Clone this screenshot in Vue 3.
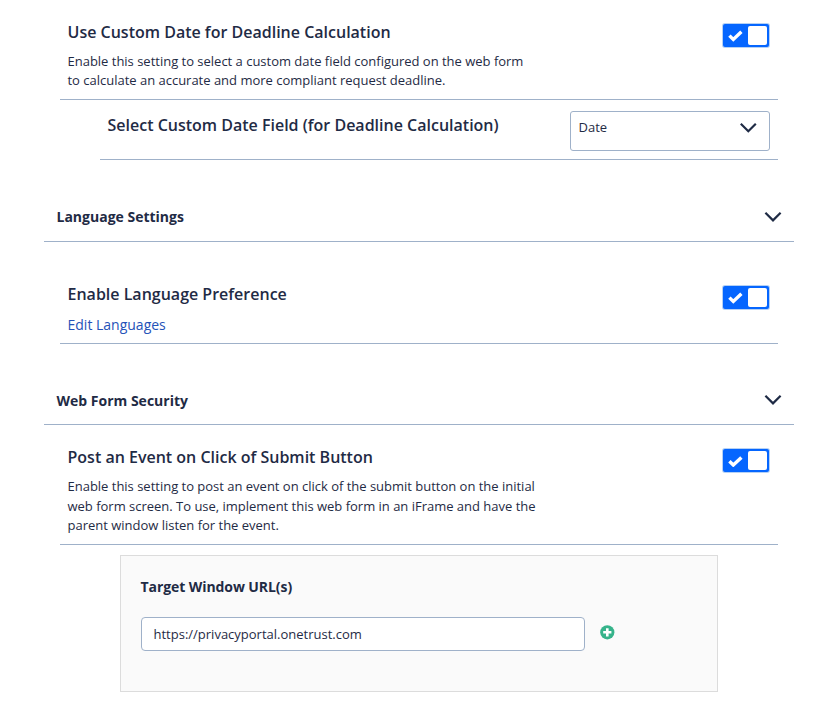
<template>
  <div class="page">
    <div class="row custom-date">
      <div class="text">
        <h3>Use Custom Date for Deadline Calculation</h3>
        <p>Enable this setting to select a custom date field configured on the web form<br />to calculate an accurate and more compliant request deadline.</p>
      </div>
      <button class="toggle" :class="{ off: !customDate }" @click="customDate = !customDate">
        <svg width="15" height="12" viewBox="0 0 15 12"><path d="M1.4 5.6 L5.3 9.4 L13.4 1.8" /></svg>
        <span class="knob"></span>
      </button>
    </div>

    <div class="row sub">
      <h3>Select Custom Date Field (for Deadline Calculation)</h3>
      <div class="select">
        <span>Date</span>
        <svg class="chevron" width="18" height="12" viewBox="0 0 18 12"><path d="M1.8 1.8 L9.3 9.2 L16.8 1.8" /></svg>
      </div>
    </div>

    <div class="head">
      <h2>Language Settings</h2>
      <svg class="chevron" width="18" height="12" viewBox="0 0 18 12"><path d="M1.4 1.8 L9 9.4 L16.6 1.8" /></svg>
    </div>

    <div class="row language">
      <div class="text">
        <h3>Enable Language Preference</h3>
        <a href="#" @click.prevent>Edit Languages</a>
      </div>
      <button class="toggle" :class="{ off: !language }" @click="language = !language">
        <svg width="15" height="12" viewBox="0 0 15 12"><path d="M1.4 5.6 L5.3 9.4 L13.4 1.8" /></svg>
        <span class="knob"></span>
      </button>
    </div>

    <div class="head security">
      <h2>Web Form Security</h2>
      <svg class="chevron" width="18" height="12" viewBox="0 0 18 12"><path d="M1.4 1.8 L9 9.4 L16.6 1.8" /></svg>
    </div>

    <div class="row">
      <div class="text">
        <h3>Post an Event on Click of Submit Button</h3>
        <p>Enable this setting to post an event on click of the submit button on the initial<br />web form screen. To use, implement this web form in an iFrame and have the<br />parent window listen for the event.</p>
      </div>
      <button class="toggle" :class="{ off: !postEvent }" @click="postEvent = !postEvent">
        <svg width="15" height="12" viewBox="0 0 15 12"><path d="M1.4 6.2 L5.3 10 L13.4 2.4" /></svg>
        <span class="knob"></span>
      </button>
    </div>

    <div class="panel">
      <h2>Target Window URL(s)</h2>
      <div v-for="(url, i) in urls" :key="i" class="url">
        <input v-model="urls[i]" type="text" />
        <button class="add" @click="urls.push('')">
          <svg width="15" height="15" viewBox="0 0 15 15">
            <circle cx="7.3" cy="7.3" r="7.1" fill="#36b38a" />
            <path d="M7.3 3.2 V11.4 M3.2 7.3 H11.4" stroke="#fff" stroke-width="2.6" />
          </svg>
        </button>
      </div>
    </div>
  </div>
</template>

<script setup>
import { ref } from 'vue'

const customDate = ref(true)
const language = ref(true)
const postEvent = ref(true)
const urls = ref(['https://privacyportal.onetrust.com'])
</script>

<style>
body { margin: 0; background: #fff; }
</style>

<style scoped>
.page {
  box-sizing: border-box; width: 838px; height: 710px; padding: 0 44px;
  font-family: "Open Sans", "Noto Sans", sans-serif; color: #1f2b45;
}
h2, h3, p { margin: 0; }
h2 { font-size: 14px; font-weight: 700; line-height: 20px; }
h3 { font-size: 16px; font-weight: 600; line-height: 24px; }
p { margin-top: 8px; font-size: 13px; line-height: 19.5px; letter-spacing: -0.01px; white-space: nowrap; }

.row {
  box-sizing: border-box; display: flex; justify-content: space-between; align-items: flex-start;
  margin: 0 16px; padding: 20px 9px 8px 7.5px; border-bottom: 1px solid #9fb1c9;
}
.row.custom-date { height: 100px; }
.custom-date p { line-height: 19px; }
.row.sub { height: 60px; margin-left: 56px; padding: 11px 8px 0 7.5px; }
.row.sub h3 { margin-top: 2px; }
.row.language { height: 102px; padding-top: 40px; }
.language a {
  display: block; margin-top: 9px; font-size: 14px; line-height: 20px;
  color: #2552b8; text-decoration: none;
}

.toggle {
  box-sizing: border-box; display: flex; align-items: center; justify-content: space-between;
  width: 46px; height: 23px; margin-top: 4px; padding: 2px 2px 2px 5px;
  border: none; border-radius: 2px; background: #0566ff; box-shadow: 0 0 0 1px #b5d1f5; cursor: pointer;
}
.toggle path { fill: none; stroke: #fff; stroke-width: 3.4; }
.toggle.off { background: #9fb1c9; flex-direction: row-reverse; }
.knob { width: 19px; height: 19px; border-radius: 2px; background: #fff; }

.select {
  box-sizing: border-box; display: flex; justify-content: space-between;
  width: 200px; height: 40px; padding: 5px 12px 0 7.5px;
  border: 1px solid #9fb1c9; border-radius: 3px; font-size: 13px; line-height: 20px;
}
.select .chevron { margin-top: 5px; }
.chevron path { fill: none; stroke: #1f2b45; stroke-width: 2.2; }

.head {
  box-sizing: border-box; display: flex; justify-content: space-between; align-items: flex-start;
  height: 82px; padding: 47px 12px 0 12.5px; border-bottom: 1px solid #9fb1c9;
}
.head .chevron { margin-top: 4px; }
.head.security { height: 81px; }
.head.security .chevron { margin-top: 3px; }

.panel {
  box-sizing: border-box; width: 598px; height: 137px; margin: 10px 0 0 76px; padding: 21px 20px;
  border: 1px solid #dcdcdc; background: #fafafa;
}
.panel h2 { margin-left: -0.5px; letter-spacing: -0.08px; }
.url { display: flex; align-items: flex-start; margin-top: 20px; }
.url input {
  box-sizing: border-box; width: 444px; height: 34px; padding: 0 12px 0 11.5px;
  border: 1px solid #9fb1c9; border-radius: 4px; background: #fff;
  font: 13px "Open Sans", "Noto Sans", sans-serif; color: #1f2b45;
}
.add { display: flex; margin: 8px 0 0 15px; padding: 0; border: none; background: none; cursor: pointer; }
</style>
